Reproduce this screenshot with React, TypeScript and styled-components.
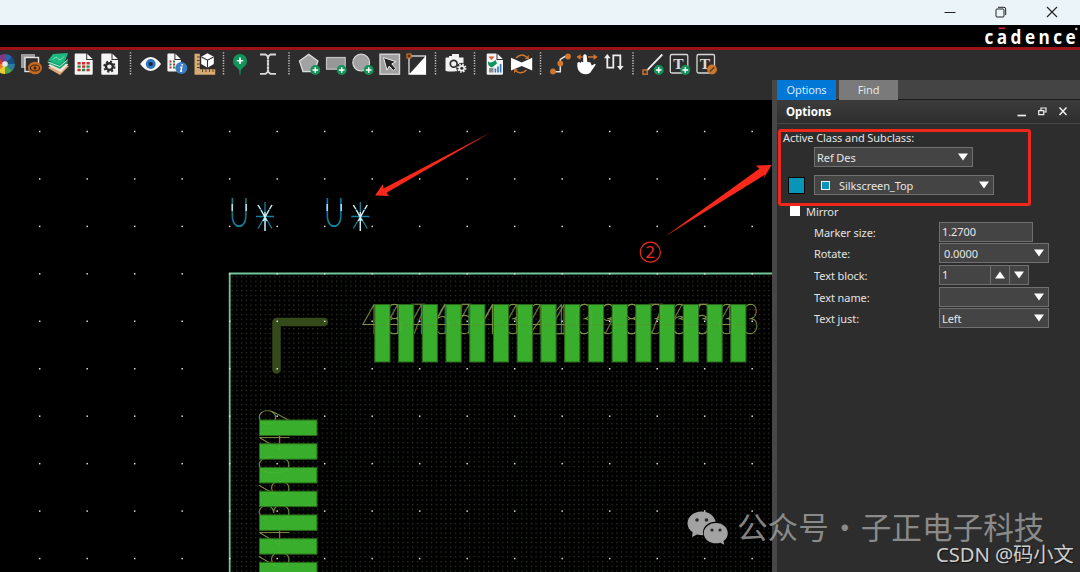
import React from "react";
import styled, { createGlobalStyle } from "styled-components";

const GlobalStyle = createGlobalStyle`
  * { box-sizing: border-box; }
  html, body { margin: 0; padding: 0; background: #000; overflow: hidden; }
  body { font-family: "Noto Sans", "Open Sans", sans-serif; }
  svg { display: block; }
`;

const Window = styled.div`
  position: relative;
  width: 1080px;
  height: 572px;
  display: flex;
  flex-direction: column;
  background: #000;
  overflow: hidden;
`;

const TitleBar = styled.header`
  height: 25px;
  flex: none;
  background: #ebf4f8;
  display: flex;
  justify-content: flex-end;
  align-items: center;
  gap: 39px;
  padding: 0 22px 1px 0;
`;

const BrandBar = styled.div`
  height: 25px;
  flex: none;
  background: #000;
  border-bottom: 3px solid #9c1216;
  display: flex;
  justify-content: flex-end;
`;

const Logo = styled.svg`
  overflow: visible;
`;

const Body = styled.div`
  flex: 1;
  min-height: 0;
  display: flex;
  flex-direction: column;
  background: #2d2d2d;
`;

const Toolbar = styled.div`
  display: flex;
  height: 30px;
  flex: none;
`;

const Main = styled.div`
  display: flex;
  flex: 1;
  min-height: 0;
`;

const CanvasPane = styled.main`
  width: 772px;
  padding-top: 19px;
  flex: none;
`;

const Side = styled.aside`
  flex: 1;
  border-left: 5px solid #474747;
  display: flex;
  flex-direction: column;
  background: #2d2d2d;
`;

const Tabs = styled.div`
  display: flex;
  gap: 3px;
  height: 20px;
  flex: none;
  background: #444;
  border-bottom: 1px solid #1b1b1b;
`;

const Tab = styled.div<{ $active?: boolean }>`
  width: 59px;
  height: 20px;
  background: ${(p) => (p.$active ? "#0078d7" : "#7a7a7a")};
  color: ${(p) => (p.$active ? "#d5eaff" : "#e6e6e6")};
  font-size: 11px;
  letter-spacing: -0.15px;
  line-height: 20px;
  text-align: center;
`;

const PanelTitle = styled.div`
  height: 24px;
  flex: none;
  display: flex;
  align-items: center;
  padding: 0 12px 0 9px;
  background: linear-gradient(#3c3c3c, #2e2e2e);
  border-bottom: 1px solid #444;
  color: #fff;
  font-size: 11.5px;
  font-weight: 700;
  justify-content: space-between;
`;

const Form = styled.div`
  position: relative;
  flex: 1;
  padding: 5px 0 0 6px;
  color: #e2e2e2;
  font-size: 11px;
  letter-spacing: -0.08px;
`;

const Label = styled.div`
  height: 18px;
  line-height: 18px;
  white-space: nowrap;
`;

const Row = styled.div<{ $gap?: number }>`
  display: flex;
  align-items: center;
  height: 20px;
  margin-bottom: ${(p) => p.$gap ?? 0}px;
`;

const Swatch = styled.div`
  width: 17px;
  height: 17px;
  margin: 0 8px 0 5px;
  background: #0795b8;
  border: 1.5px solid #000;
`;

const Chip = styled.span`
  width: 9px;
  height: 9px;
  margin: 0 9px 0 2px;
  background: #0795b8;
  border: 1px solid #e8f4f8;
`;

const Field = styled.div<{ $w: number; $pad?: number; $ml?: number; $padRight?: number }>`
  width: ${(p) => p.$w}px;
  height: 20px;
  margin-left: ${(p) => p.$ml ?? 0}px;
  padding: 0 ${(p) => p.$padRight ?? 4}px 0 ${(p) => p.$pad ?? 2}px;
  display: flex;
  align-items: center;
  border: 1px solid #707070;
  background: #444;
  color: #e6e6e6;
  white-space: nowrap;
`;

const Value = styled.span`
  flex: 1;
  line-height: 18px;
  padding-top: 1px;
`;

const StepButton = styled.span`
  width: 19px;
  height: 18px;
  display: flex;
  align-items: center;
  justify-content: center;
  border-left: 1px solid #707070;
`;

const MirrorRow = styled.div`
  display: flex;
  align-items: center;
  gap: 6px;
  height: 16px;
  margin: 8px 0 2.6px 7px;
`;

const CheckBox = styled.span`
  width: 10px;
  height: 10px;
  background: #fff;
`;

const FormRow = styled.div`
  display: flex;
  align-items: center;
  height: 20px;
  margin: 0 0 1.7px 31px;
`;

const RowLabel = styled.span`
  width: 125px;
  padding-top: 1px;
`;

const Highlight = styled.div`
  position: absolute;
  left: 1px;
  top: 5px;
  width: 253px;
  height: 77px;
  border: 3px solid #f0281c;
  border-radius: 3px;
`;

const Watermark = styled.div`
  position: absolute;
  left: 687px;
  top: 508px;
  display: flex;
  align-items: center;
  gap: 9px;
  height: 40px;
  color: rgba(160, 160, 160, 0.82);
  font: 400 30.6px/36px "Noto Sans CJK SC", sans-serif;
  white-space: nowrap;
`;

const WatermarkText = styled.span`
  height: 40px;
`;

const Dot = styled.span`
  display: inline-block;
  width: 32px;
  text-align: center;
`;

const Credit = styled.div`
  position: absolute;
  left: 936px;
  top: 541px;
  color: #cfcfcf;
  font: 400 20.3px/26px "Noto Sans", "Noto Sans CJK SC", sans-serif;
  letter-spacing: -0.1px;
  white-space: nowrap;
  text-shadow: 1px 1px 1px #111;
`;

/* Toolbar icons share one coordinate strip, each slot showing its own span. */
const Slot = ({ x, w, children }: { x: number; w: number; children: React.ReactNode }) => (
  <svg width={w} height="30" viewBox={`${x} 50 ${w} 30`} fill="none">
    {children}
  </svg>
);

const Separator = ({ x, w, at }: { x: number; w: number; at: number }) => (
  <Slot x={x} w={w}>
    <path d={`M${at} 52.3V75`} stroke="#bdbdbd" strokeWidth="1.5" strokeDasharray="1.3 1.3" />
  </Slot>
);

const Plus = ({ x, y }: { x: number; y: number }) => (
  <g>
    <circle cx={x} cy={y} r="4.9" fill="#12945a" />
    <path d={`M${x - 2.8} ${y}h5.6M${x} ${y - 2.8}v5.6`} stroke="#fff" strokeWidth="1.5" />
  </g>
);

const Sheet = ({ x, w, h = 21.3 }: { x: number; w: number; h?: number }) => (
  <g>
    <path d={`M${x + 1} 53.5h${w - 7.5}v6.500h6.500v${h - 7.5}q0 1-1 1h${-(w - 2)}q-1 0-1-1v${-(h - 2)}q0-1 1-1z`} fill="#f4f4f4" />
    <path d={`M${x + w - 5.5} 53.700l5.300 5.300h-5.300z`} fill="#f4f4f4" />
  </g>
);

const Gear = ({ x, y, r, color, hole }: { x: number; y: number; r: number; color: string; hole: string }) => (
  <g>
    <circle cx={x} cy={y} r={r} fill={color} />
    <circle cx={x} cy={y} r={r + 0.6} stroke={color} strokeWidth="1.7" strokeDasharray={`${((r + 0.6) * Math.PI) / 8} ${((r + 0.6) * Math.PI) / 8}`} />
    <circle cx={x} cy={y} r={r * 0.48} fill={hole} />
  </g>
);

const TextBox = ({ x }: { x: number }) => (
  <g>
    <rect x={x} y="54.5" width="17.500" height="18.500" rx="1.500" stroke="#d8d8d8" strokeWidth="1.300" />
    <text x={x + 8} y="68.700" fontFamily="Liberation Serif" fontWeight="700" fontSize="15.500" textAnchor="middle" fill="#dcdcdc">T</text>
  </g>
);

const wheel = ["#2a62a8", "#17507f", "#2a7d9c", "#4ca54a", "#e8d034", "#ef7d2c", "#d83c2c", "#7e3a86"];

const ToolbarIcons = () => (
  <Toolbar>
    <Slot x={0} w={18}>
      {wheel.map((c, i) => {
        const a = ((i * 45 - 90) * Math.PI) / 180;
        const b = ((i * 45 - 44) * Math.PI) / 180;
        return (
          <path key={c} fill={c} d={`M5 64L${5 + 10 * Math.cos(a)} ${64 + 10 * Math.sin(a)}A10 10 0 0 1 ${5 + 10 * Math.cos(b)} ${64 + 10 * Math.sin(b)}z`} />
        );
      })}
      <circle cx="5" cy="64" r="2.800" fill="#e6e9ea" />
    </Slot>
    <Slot x={18} w={27}>
      <rect x="21" y="54" width="14" height="14" fill="#9b9b9b" />
      <rect x="25" y="57.500" width="13.500" height="14" fill="#2d2d2d" stroke="#e4e4e4" strokeWidth="1.400" />
      <ellipse cx="35" cy="68" rx="7" ry="6.300" fill="#c4691f" />
      <ellipse cx="35" cy="68" rx="4.600" ry="3" stroke="#3a2412" strokeWidth="1.200" />
      <circle cx="35" cy="68" r="1.500" fill="#3a2412" />
    </Slot>
    <Slot x={45} w={26}>
      <path d="M48 68l12 7 9-9-14-3z" fill="#e0a97c" />
      <path d="M48 65.500l13 6.500 7.500-8-14-3z" fill="#f2e4d6" />
      <path d="M47.500 63l12.500 6 8.500-7.500-13-2z" fill="#12a36d" />
      <path d="M47.800 62l12 4.500 8.200-7" stroke="#d9f2e6" strokeWidth=".9" />
      <path d="M48 60.500l5-6.500 15-1-2.500 7-6 4.500z" fill="#1db981" />
      <path d="M53 59.500q3-4 5-1t6-2" stroke="#8ce0bd" strokeWidth="1" />
    </Slot>
    <Slot x={71} w={26}>
      <Sheet x={74.7} w={18} />
      <path d="M77.500 63.200h3.200M82 63.200h3.200M86.500 63.200h3.200M77.500 70h3.200M86.500 70h3.200" stroke="#cf2d2a" strokeWidth="2.400" />
      <path d="M77.500 66.600h3.200M86.500 66.600h3.200M82 70h3.200" stroke="#1d8a4d" strokeWidth="2.400" />
      <path d="M82 66.600h3.200" stroke="#cf2d2a" strokeWidth="2.400" />
    </Slot>
    <Slot x={97} w={26}>
      <Sheet x={101.3} w={16.7} />
      <Gear x={109.4} y={66.6} r={4.6} color="#292929" hole="#eee" />
    </Slot>
    <Separator x={123} w={14} at={130.5} />
    <Slot x={137} w={27}>
      <path d="M140.200 64q5-7 10.400-7t10.500 7q-5 7-10.500 7t-10.400-7z" fill="#f6f6f6" />
      <circle cx="150.700" cy="64" r="4.900" fill="#2e74b8" />
      <circle cx="150.700" cy="64" r="2.100" fill="#10263f" />
    </Slot>
    <Slot x={164} w={26}>
      <Sheet x={167.4} w={13.5} h={18} />
      <path d="M169.500 61.500h2M169.500 67.500h2M173 64.500h2" stroke="#cf2d2a" strokeWidth="2" />
      <path d="M169.500 64.500h2M173 61.500h2M173 67.500h2" stroke="#1d8a4d" strokeWidth="2" />
      <circle cx="181.300" cy="68" r="6" fill="#3a7cc4" />
      <path d="M182.300 64l-.3 1.500M180.200 67.200h1.500l-.8 4h1.200" stroke="#fff" strokeWidth="1.500" />
    </Slot>
    <Slot x={190} w={27}>
      <path d="M194.500 53.800h5.300v15.400h15.400v5.500h-20.700z" fill="#d7ab72" />
      <path d="M197 57h2.800M197 60.500h2.800M197 64h2.800M197 67.500h2.800M202.500 69.200v2.800M206 69.200v2.800M209.500 69.200v2.800M213 69.200v2.800" stroke="#5b4122" strokeWidth="1" />
      <path d="M207.500 53.300l6.300 3.400v7.300l-6.300 3.700-6.300-3.700v-7.300z" fill="#fff" />
      <path d="M201.500 57l6 3.200 6-3.200M207.500 60.200v7.500" stroke="#2d2d2d" strokeWidth="1.100" />
    </Slot>
    <Separator x={217} w={12} at={223.5} />
    <Slot x={229} w={24}>
      <path d="M240 67v7.500" stroke="#12814c" strokeWidth="1.600" />
      <path d="M236 66.500h8l-4 4.500z" fill="#12945a" />
      <circle cx="240" cy="61" r="7" fill="#12945a" />
      <path d="M236.800 60.700h6.400M240 57.500v6.400" stroke="#fff" strokeWidth="1.600" />
    </Slot>
    <Slot x={253} w={29}>
      <path d="M260 54.500h5.500l2.500 2 2.500-2h5.500M260 73.800h5.500l2.500-2 2.500 2h5.500" stroke="#d8d8d8" strokeWidth="1.800" />
      <path d="M268 56v17" stroke="#d8d8d8" strokeWidth="2.200" strokeDasharray="3 .4" />
    </Slot>
    <Separator x={282} w={13} at={289} />
    <Slot x={295} w={28}>
      <path d="M308.700 54.300l9.200 6.600-3.500 10.800h-11.400l-3.500-10.800z" fill="#a2a2a2" stroke="#dedede" strokeWidth="1.300" />
      <Plus x={315.3} y={70} />
    </Slot>
    <Slot x={323} w={26}>
      <rect x="326.500" y="57.500" width="18.700" height="11.700" fill="#979797" stroke="#c4c4c4" strokeWidth="1.200" />
      <Plus x={341.7} y={70} />
    </Slot>
    <Slot x={349} w={27}>
      <circle cx="361.200" cy="62.600" r="8.400" fill="#a2a2a2" stroke="#dadada" strokeWidth="1.200" />
      <Plus x={368.7} y={70} />
    </Slot>
    <Slot x={376} w={27}>
      <rect x="380" y="54.200" width="19.500" height="20" fill="#a0a0a0" stroke="#d6d6d6" strokeWidth="1.400" />
      <path d="M383.500 57.500l12.500 4.200-4.200 2.200 4 4.500-2.400 2.300-4.200-4.500-2.200 4z" fill="#262626" stroke="#ececec" strokeWidth="1" />
    </Slot>
    <Slot x={403} w={26}>
      <rect x="409" y="56" width="16.500" height="18" stroke="#f1f1f1" strokeWidth="1.200" />
      <path d="M409 74.500L426 55.700v18.800z" fill="#fff" />
      <rect x="407" y="54" width="4" height="4" fill="#503018" stroke="#d07324" strokeWidth="1.200" />
    </Slot>
    <Separator x={429} w={13} at={435.5} />
    <Slot x={442} w={27}>
      <path d="M446 57.500h3v-1.500h3v1.500-3.500h7v3.500h4.500v13q-17 2-18 0v-12z" fill="#f1f1f1" />
      <circle cx="453.700" cy="63.800" r="3.400" stroke="#2d2d2d" strokeWidth="1.700" />
      <circle cx="461.800" cy="68.200" r="5.500" fill="#2d2d2d" />
      <Gear x={461.8} y={68.2} r={3.2} color="#f1f1f1" hole="#2d2d2d" />
    </Slot>
    <Separator x={469} w={13} at={474.5} />
    <Slot x={482} w={25}>
      <Sheet x={486.7} w={16.3} />
      <path d="M488.500 56.500h6l-3 3.500z" fill="#e0522d" />
      <path d="M488 61.500q3.500 2.500 7.500-1.500l1.500 3.500-5 4q-4.500-1-4-6z" fill="#129462" />
      <path d="M489 68h4.500v4.500h-4.500z" fill="#8f8f8f" />
      <path d="M495.400 72.500v-4M498 72.500v-6M500.600 72.500v-8.500" stroke="#3677ba" strokeWidth="1.600" />
    </Slot>
    <Slot x={507} w={27}>
      <path d="M511 57.800l10.700 4.700 10.500-4.700v12.600l-10.500-4.400-10.700 4.400z" fill="#fff" />
      <path d="M516 58q5.500-5.500 10.500-1M526.500 70q-5.500 5-10.500 1" stroke="#d2762e" strokeWidth="1.600" />
      <path d="M524.800 59h4v-4zM518 69.300h-4v4z" fill="#d2762e" />
    </Slot>
    <Separator x={534} w={13} at={540.5} />
    <Slot x={547} w={26}>
      <path d="M553 71.700h7.300v-12.400l4.500-2.800h3" stroke="#e6e6e6" strokeWidth="1.500" />
      <circle cx="553" cy="71.500" r="2.900" fill="#d2762e" />
      <circle cx="560.300" cy="63.500" r="2.900" fill="#d2762e" />
      <circle cx="568" cy="56.500" r="2.900" fill="#d2762e" />
    </Slot>
    <Slot x={573} w={27}>
      <path d="M577.500 57h5M588 57h8.500" stroke="#d2762e" strokeWidth="1.500" />
      <path d="M580.500 54l-4 3 4 3zM593.500 54l4 3-4 3z" fill="#d2762e" />
      <path d="M583.200 55.500q1.800-2.400 3.500 0l.6 6.500 3 .3q1 2.200 1.600 3.200l3-1.700q1.500.3.300 1.800l-5.200 7.400q-4 2.700-9 0-4.500-3-3.600-10 1.700-1.800 3 0l1.200-1.500 1.600 1z" fill="#fff" />
    </Slot>
    <Slot x={600} w={27}>
      <path d="M607.300 57v10.700h6v-12.300h7v12" stroke="#ededed" strokeWidth="1.800" />
      <path d="M604 58.300l3.300-4.300 3.300 4.300zM617 66l3.300 4.300 3.300-4.300z" fill="#ededed" />
    </Slot>
    <Separator x={627} w={13} at={633} />
    <Slot x={640} w={26}>
      <path d="M647 70.300L662.300 54.500" stroke="#ededed" strokeWidth="1.800" />
      <rect x="643" y="70" width="4.200" height="4.200" stroke="#d2762e" strokeWidth="1.400" />
      <Plus x={658.7} y={70} />
    </Slot>
    <Slot x={666} w={27}>
      <TextBox x={670.3} />
      <Plus x={685.3} y={70} />
    </Slot>
    <Slot x={693} w={27}>
      <TextBox x={697} />
      <circle cx="712" cy="69.500" r="4.900" fill="#c8792f" />
      <path d="M709.800 71.800l4.400-4.600" stroke="#6b3b12" strokeWidth="1.400" />
    </Slot>
  </Toolbar>
);

const columns = Array.from({ length: 16 }, (_, i) => 39.7 + i * 47.5);
const lines = Array.from({ length: 10 }, (_, i) => 131.5 + i * 47.45);
const topPads = Array.from({ length: 16 }, (_, i) => ({ n: 48 - i, x: 374.8 + i * 23.73 }));
const leftPads = Array.from({ length: 7 }, (_, i) => ({ n: "9406346"[i], y: 420 + i * 23.73 }));

const Star = ({ x }: { x: number }) => (
  <g strokeWidth="1.300">
    <path d={`M${x - 9} 216.500h18M${x} 202v29M${x - 7} 228.500L${x + 7} 205M${x - 7} 205L${x + 7} 228.500`} stroke="#17809c" />
    <path d={`M${x} 212v19M${x - 7} 205l2.500 4M${x + 7} 205l-2.500 4M${x - 4} 210l6 11M${x + 4} 210l-6 11`} stroke="#d7eef2" />
  </g>
);

const BoardCanvas = () => (
  <svg width="772" height="473" viewBox="0 99 772 473">
    <defs>
      <pattern id="fine" x="229.600" y="274" width="4.750" height="4.750" patternUnits="userSpaceOnUse">
        <rect x="2" y="2" width="1.100" height="1.100" fill="#3d4a38" />
      </pattern>
    </defs>
    <rect y="100" width="772" height="472" fill="#000" />
    <rect x="230" y="274" width="542" height="298" fill="url(#fine)" />
    <path d="M276.500 369.500V322H324" fill="none" stroke="#344a1b" strokeWidth="8.500" strokeLinecap="round" strokeLinejoin="round" />

    <g fill="#87924a" stroke="#87924a" strokeWidth=".45" fontFamily="Lato" fontWeight="100" fontSize="42">
      {topPads.map((p) => (
        <text key={p.n} transform={`translate(${p.x - 13} 334) scale(.74 1)`} letterSpacing="7.500">{p.n}</text>
      ))}
      {leftPads.map((p) => (
        <text key={p.y} transform={`translate(289 ${p.y + 7}) rotate(-90) scale(.8 1)`}>{p.n}</text>
      ))}
    </g>
    <g fill="#3db82f" stroke="#2c6d1c" strokeWidth="1" opacity=".94">
      {topPads.map((p) => (
        <rect key={p.n} x={p.x} y="304.500" width="15.200" height="57.500" />
      ))}
      {leftPads.map((p) => (
        <rect key={p.y} x="259.500" y={p.y} width="57.500" height="15.500" />
      ))}
    </g>
    <path d="M362 324.700H745" stroke="#75803a" strokeWidth="1" opacity=".35" />
    <path d="M229.700 572V273.500H772" fill="none" stroke="#74c59a" strokeWidth="1.800" />
    <g fill="#dcdcdc">
      {lines.map((y) => columns.map((x) => (
        <rect key={`${x}-${y}`} x={x - 0.75} y={y - 0.75} width="1.500" height="1.500" />
      )))}
    </g>

    {[231, 326].map((x) => (
      <g key={x}>
        <text transform={`translate(${x - 2} 227) scale(.68 1)`} fontFamily="Lato" fontWeight="300" fontSize="41" fill="#1a809a">U</text>
        <path d={`M${x + 1.2} 204v7M${x + 15.2} 204v7`} stroke="#dcebee" strokeWidth="1.300" />
      </g>
    ))}
    <Star x={265} />
    <Star x={360.3} />

    <g fill="#f9281a">
      <path d="M491.500 132L386.500 192.800 389 196 375 195.600 382.800 184.300 383.500 188.400z" />
      <path d="M665 236.500L764.700 174.800 763.500 178.800 771.500 165 756 165.500 759.300 168.700z" />
    </g>
    <circle cx="650.300" cy="252.200" r="10" fill="none" stroke="#ee2a20" strokeWidth="1.200" />
    <text x="650.300" y="258" textAnchor="middle" fontFamily="Noto Sans" fontSize="16.500" fill="#ee2a20">2</text>
  </svg>
);

const Caret = ({ up }: { up?: boolean }) => (
  <svg width="10" height="8" viewBox="0 0 10 8">
    <path d={up ? "M0 7.500L5 .500l5 7z" : "M0 .500h10L5 7.500z"} fill="#fff" />
  </svg>
);

const WechatMark = () => (
  <svg width="41" height="34" viewBox="0 0 41 34">
    <path d="M14.500.500C6.700.500.500 5.700.500 12.300c0 3.800 2 7 5.200 9.200L5 26l5-2.600q3 .9 6.300.8C14.500 16 21 10.500 28.700 10.700 27.300 4.600 21.500.500 14.500.500z" fill="#a2a2a2" />
    <path d="M29 12c-6.800 0-12.200 4.500-12.200 10.200S22.200 32.300 29 32.300q2.300 0 4.300-.6l4 2-.8-3.600c2.700-1.900 4.300-4.700 4.300-7.900C40.800 16.500 35.700 12 29 12z" fill="#a2a2a2" />
    <g fill="#292929">
      <circle cx="10" cy="9" r="1.800" /><circle cx="19.500" cy="9" r="1.800" />
      <circle cx="25" cy="19" r="1.600" /><circle cx="33" cy="19" r="1.600" />
    </g>
  </svg>
);

export default function App() {
  return (
    <Window>
      <GlobalStyle />
      <TitleBar>
        <svg width="12" height="12" viewBox="0 0 12 12"><path d="M.500 6.500h11" stroke="#222" strokeWidth="1" /></svg>
        <svg width="12" height="12" viewBox="0 0 12 12" fill="none" stroke="#222"><rect x="1" y="3" width="8" height="8" rx="1" /><path d="M3 1.300h6q1.700 0 1.700 1.700v6" /></svg>
        <svg width="12" height="12" viewBox="0 0 12 12"><path d="M1 1l10 10M11 1L1 11" stroke="#222" strokeWidth="1.100" /></svg>
      </TitleBar>
      <BrandBar>
        <Logo width="98" height="22" viewBox="982 25 98 22">
          <text transform="translate(984.500 44) scale(.86 1)" fontFamily="Open Sans" fontWeight="700" fontSize="20" textLength="106" fill="#fff">cadence</text>
          <path d="M998.500 28.300h6.500" stroke="#d22040" strokeWidth="1.700" />
          <circle cx="1076.300" cy="29" r="1.300" fill="#bbb" />
        </Logo>
      </BrandBar>
      <Body>
        <ToolbarIcons />
        <Main>
          <CanvasPane><BoardCanvas /></CanvasPane>
          <Side>
            <Tabs>
              <Tab $active>Options</Tab>
              <Tab>Find</Tab>
            </Tabs>
            <PanelTitle>
              Options
              <svg width="52" height="14" viewBox="1016 104 52 14" fill="none" stroke="#eee">
                <path d="M1017.500 114.500h8.500" strokeWidth="1.700" />
                <path d="M1041 109v-2h5v4h-2M1038.700 109.700h5v4h-5z" strokeWidth="1.200" />
                <path d="M1059.500 106.500l7 7.500M1066.500 106.500l-7 7.500" strokeWidth="1.500" />
              </svg>
            </PanelTitle>
            <Form>
              <Label>Active Class and Subclass:</Label>
              <Row $gap={8}>
                <Field $w={159} $ml={31}><Value>Ref Des</Value><Caret /></Field>
              </Row>
              <Row>
                <Swatch />
                <Field $w={180} $pad={4} $ml={1}><Chip /><Value>Silkscreen_Top</Value><Caret /></Field>
              </Row>
              <MirrorRow><CheckBox />Mirror</MirrorRow>
              <FormRow><RowLabel>Marker size:</RowLabel><Field $w={94}><Value>1.2700</Value></Field></FormRow>
              <FormRow><RowLabel>Rotate:</RowLabel><Field $w={110} $pad={4}><Value>0.0000</Value><Caret /></Field></FormRow>
              <FormRow>
                <RowLabel>Text block:</RowLabel>
                <Field $w={90} $padRight={0}><Value>1</Value><StepButton><Caret up /></StepButton><StepButton><Caret /></StepButton></Field>
              </FormRow>
              <FormRow><RowLabel>Text name:</RowLabel><Field $w={110}><Value /><Caret /></Field></FormRow>
              <FormRow><RowLabel>Text just:</RowLabel><Field $w={110}><Value>Left</Value><Caret /></Field></FormRow>
              <Highlight />
            </Form>
          </Side>
        </Main>
      </Body>
      <Watermark>
        <WechatMark />
        <WatermarkText>公众号<Dot>·</Dot>子正电子科技</WatermarkText>
      </Watermark>
      <Credit>CSDN @码小文</Credit>
    </Window>
  );
}
